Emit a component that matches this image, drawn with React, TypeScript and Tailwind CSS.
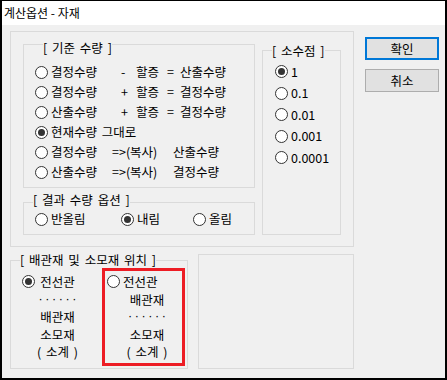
import React from 'react';

function Radio({ checked }: { checked?: boolean }) {
  return (
    <span className="w-[13px] h-[13px] rounded-full border border-[#333333] bg-white flex items-center justify-center shrink-0">
      {checked && <span className="w-[7px] h-[7px] rounded-full bg-[#333333]" />}
    </span>
  );
}

function Label({ text, className }: { text: string; className: string }) {
  return (
    <span className={`absolute bg-[#f0f0f0] whitespace-pre leading-[14px] ${className}`}>{text}</span>
  );
}

// 기준 수량 rows: [left, operator, middle, '=', right]
const baseRows = [
  { a: '결정수량', op: '-', b: '할증', c: '산출수량' },
  { a: '결정수량', op: '+', b: '할증', c: '결정수량' },
  { a: '산출수량', op: '+', b: '할증', c: '결정수량' },
];

const copyRows = [
  { a: '결정수량', c: '산출수량' },
  { a: '산출수량', c: '결정수량' },
];

const decimals = ['1', '0.1', '0.01', '0.001', '0.0001'];

function BaseQty() {
  return (
    <div className="relative w-[232px] h-[144px] border border-[#dadada] pl-[11px] pt-[17px]">
      <Label text="[ 기준 수량 ]" className="left-[19px] -top-[4px]" />
      {baseRows.map((r, i) => (
        <div key={i} className="h-[20px] flex items-center whitespace-nowrap">
          <Radio />
          <span className="ml-[3px] w-[70px] shrink-0">{r.a}</span>
          <span className="w-[15px] shrink-0">{r.op}</span>
          <span className="w-[31px] shrink-0">{r.b}</span>
          <span className="w-[13px] shrink-0">=</span>
          <span>{r.c}</span>
        </div>
      ))}
      <div className="h-[20px] flex items-center">
        <Radio checked />
        <span className="ml-[3px]">현재수량 그대로</span>
      </div>
      {copyRows.map((r, i) => (
        <div key={i} className="h-[20px] flex items-center whitespace-nowrap">
          <Radio />
          <span className="ml-[3px] w-[61px] shrink-0">{r.a}</span>
          <span className="w-[61px] shrink-0">=&gt;(복사)</span>
          <span>{r.c}</span>
        </div>
      ))}
    </div>
  );
}

function ResultQty() {
  return (
    <div className="relative mt-[14px] w-[232px] h-[33px] border border-[#dadada] pl-[11px] pt-[6px]">
      <Label text="[ 결과 수량 옵션 ]" className="left-[9px] -top-[10px]" />
      <div className="h-[20px] flex items-center">
        <span className="w-[86px] flex items-center">
          <Radio />
          <span className="ml-[3px]">반올림</span>
        </span>
        <span className="w-[72px] flex items-center">
          <Radio checked />
          <span className="ml-[3px]">내림</span>
        </span>
        <span className="flex items-center">
          <Radio />
          <span className="ml-[3px]">올림</span>
        </span>
      </div>
    </div>
  );
}

function Decimals() {
  return (
    <div className="relative ml-[7px] mt-[6px] w-[79px] h-[185px] border border-[#dadada] pl-[12px] pt-[10px]">
      <Label text="[ 소수점 ]" className="left-[9px] -top-[7px]" />
      {decimals.map((d, i) => (
        <div key={d} className="h-[21.5px] flex items-center">
          <Radio checked={i === 0} />
          <span className="ml-[3px]">{d}</span>
        </div>
      ))}
    </div>
  );
}

function Placement() {
  return (
    <div className="relative w-[178px] h-[109px] border border-[#dadada] pl-[11px] pt-[12px]">
      <Label text="[ 배관재 및 소모재 위치 ]" className="left-[9px] -top-[8px]" />
      <div className="flex leading-[17.5px]">
        <div className="flex items-start">
          <span className="h-[17.5px] flex items-center">
            <Radio checked />
          </span>
          <div className="ml-[2px] w-[41px] flex flex-col items-center">
            <span>전선관</span>
            <span className="font-['Liberation_Sans',sans-serif] tracking-[2.6px] pl-[2.6px]">······</span>
            <span>배관재</span>
            <span>소모재</span>
            <span className="whitespace-pre">( 소계 )</span>
          </div>
        </div>
        <div className="ml-[29px] flex items-start">
          <span className="h-[17.5px] flex items-center">
            <Radio />
          </span>
          <div className="ml-[3px] w-[48px] flex flex-col items-center">
            <span className="self-start">전선관</span>
            <span>배관재</span>
            <span className="font-['Liberation_Sans',sans-serif] tracking-[2.6px] pl-[2.6px]">······</span>
            <span>소모재</span>
            <span className="whitespace-pre">( 소계 )</span>
          </div>
        </div>
      </div>
      {/* highlight annotation */}
      <div className="absolute left-[91px] top-[7px] w-[83px] h-[98px] border-[3px] border-[#ed1c24]" />
    </div>
  );
}

export default function App() {
  return (
    <div className="w-[447px] h-[380px] border-x-2 border-b-2 border-t border-black bg-[#f0f0f0] flex flex-col text-[12.5px] leading-[14px] text-black [word-spacing:2px] font-['Noto_Sans_CJK_KR',sans-serif]">
      <div className="h-[24px] shrink-0 bg-white pl-[2px] leading-[24px] text-[12px] [word-spacing:0px]">계산옵션 - 자재</div>
      <div className="flex">
        <div className="ml-[8px] mt-[6px] flex flex-col">
          <div className="w-[344px] h-[216px] border border-[#dadada] pl-[12px] pt-[12px] flex items-start">
            <div className="flex flex-col">
              <BaseQty />
              <ResultQty />
            </div>
            <Decimals />
          </div>
          <div className="mt-[7px] flex items-end">
            <Placement />
            <div className="ml-[10px] w-[156px] h-[115px] border border-[#dadada]" />
          </div>
        </div>
        <div className="ml-[11px] mt-[12px] flex flex-col">
          <button className="w-[74px] h-[23px] border-2 border-[#0078d7] bg-[#e1e1e1] flex items-center justify-center">
            확인
          </button>
          <button className="mt-[9px] w-[74px] h-[23px] border border-[#adadad] bg-[#e1e1e1] flex items-center justify-center">
            취소
          </button>
        </div>
      </div>
    </div>
  );
}
